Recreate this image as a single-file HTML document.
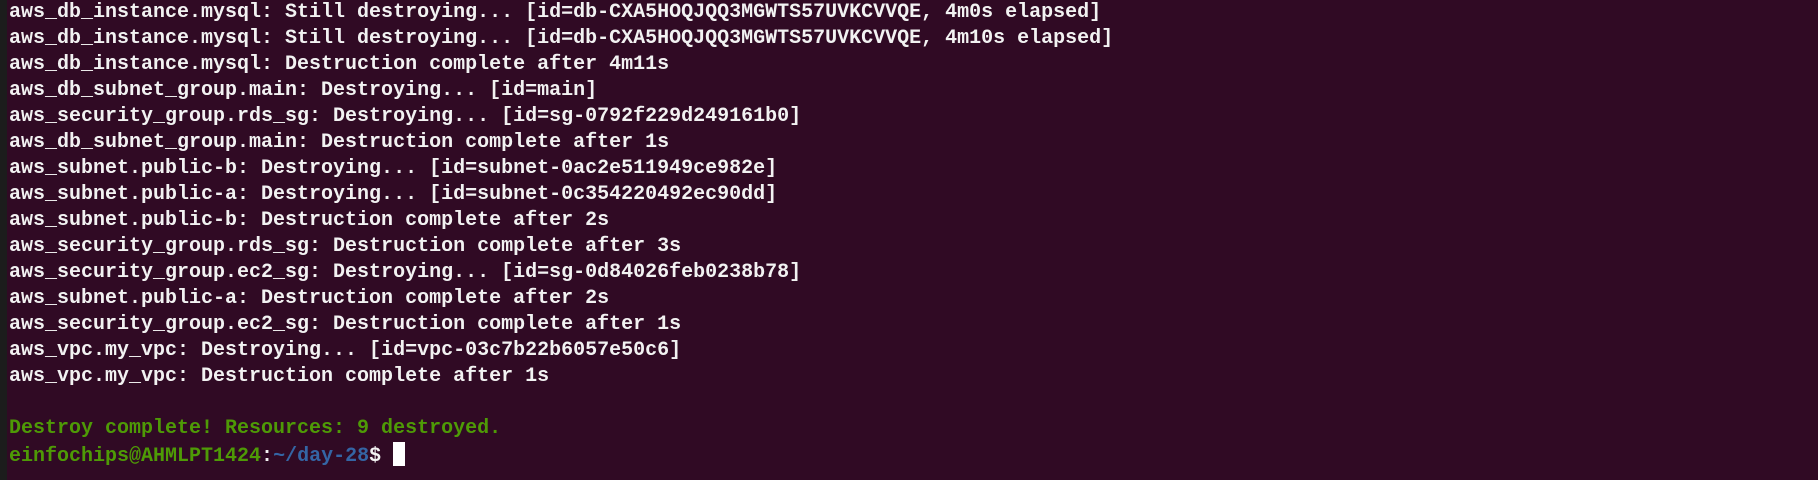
<!DOCTYPE html>
<html><head><meta charset="utf-8"><style>
html,body{margin:0;padding:0;width:1818px;height:480px;overflow:hidden;background:#300a24;}
.strip{position:absolute;left:0;top:0;width:7px;height:480px;background:#1c1c1c;}
pre{position:absolute;left:9px;top:0;margin:0;font-family:"Liberation Mono",monospace;font-weight:bold;font-size:20px;line-height:26px;color:#f2f2f2;white-space:pre;}
.g{color:#4e9a06}.b{color:#3465a4}
.cur{display:inline-block;width:12px;height:24px;background:#fff;vertical-align:-5px;}
</style></head><body><div class="strip"></div><pre>aws_db_instance.mysql: Still destroying... [id=db-CXA5HOQJQQ3MGWTS57UVKCVVQE, 4m0s elapsed]
aws_db_instance.mysql: Still destroying... [id=db-CXA5HOQJQQ3MGWTS57UVKCVVQE, 4m10s elapsed]
aws_db_instance.mysql: Destruction complete after 4m11s
aws_db_subnet_group.main: Destroying... [id=main]
aws_security_group.rds_sg: Destroying... [id=sg-0792f229d249161b0]
aws_db_subnet_group.main: Destruction complete after 1s
aws_subnet.public-b: Destroying... [id=subnet-0ac2e511949ce982e]
aws_subnet.public-a: Destroying... [id=subnet-0c354220492ec90dd]
aws_subnet.public-b: Destruction complete after 2s
aws_security_group.rds_sg: Destruction complete after 3s
aws_security_group.ec2_sg: Destroying... [id=sg-0d84026feb0238b78]
aws_subnet.public-a: Destruction complete after 2s
aws_security_group.ec2_sg: Destruction complete after 1s
aws_vpc.my_vpc: Destroying... [id=vpc-03c7b22b6057e50c6]
aws_vpc.my_vpc: Destruction complete after 1s

<span class="g">Destroy complete! Resources: 9 destroyed.</span>
<span class="g">einfochips@AHMLPT1424</span>:<span class="b">~/day-28</span>$ <span class="cur"></span></pre></body></html>
